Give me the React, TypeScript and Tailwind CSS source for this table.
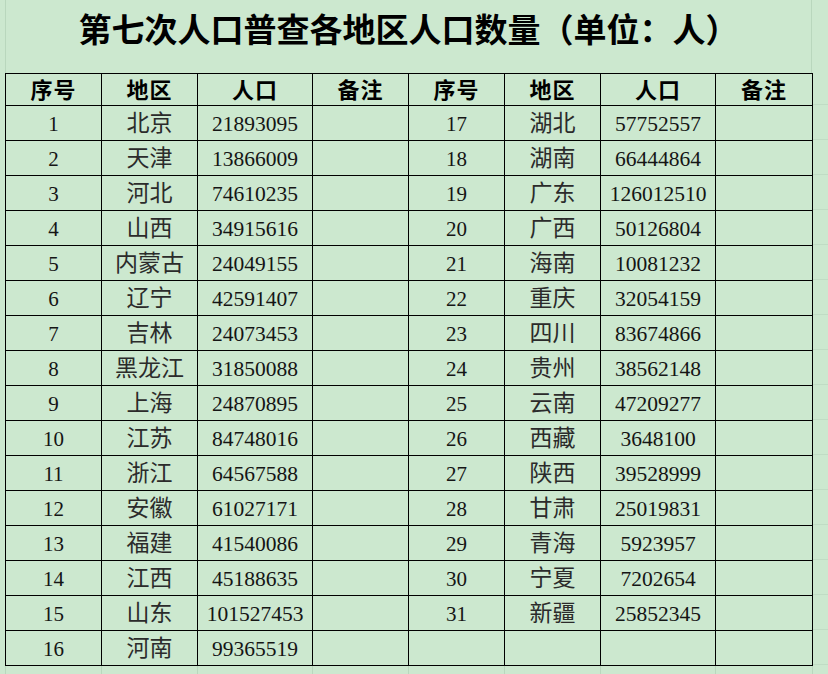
const left: [number, string, string][] = [
  [1, "北京", "21893095"],
  [2, "天津", "13866009"],
  [3, "河北", "74610235"],
  [4, "山西", "34915616"],
  [5, "内蒙古", "24049155"],
  [6, "辽宁", "42591407"],
  [7, "吉林", "24073453"],
  [8, "黑龙江", "31850088"],
  [9, "上海", "24870895"],
  [10, "江苏", "84748016"],
  [11, "浙江", "64567588"],
  [12, "安徽", "61027171"],
  [13, "福建", "41540086"],
  [14, "江西", "45188635"],
  [15, "山东", "101527453"],
  [16, "河南", "99365519"],
];

const right: [number, string, string][] = [
  [17, "湖北", "57752557"],
  [18, "湖南", "66444864"],
  [19, "广东", "126012510"],
  [20, "广西", "50126804"],
  [21, "海南", "10081232"],
  [22, "重庆", "32054159"],
  [23, "四川", "83674866"],
  [24, "贵州", "38562148"],
  [25, "云南", "47209277"],
  [26, "西藏", "3648100"],
  [27, "陕西", "39528999"],
  [28, "甘肃", "25019831"],
  [29, "青海", "5923957"],
  [30, "宁夏", "7202654"],
  [31, "新疆", "25852345"],
];

const widths = [96, 96, 115, 96, 96, 96, 115, 97];
const cjk = { fontFamily: '"Noto Sans CJK SC", sans-serif' };
const serif = { fontFamily: '"Liberation Serif", "Noto Sans CJK SC", serif' };

const HeadCells = () => (
  <>
    {["序号", "地区", "人口", "备注"].map((h) => (
      <th
        key={h}
        className="border border-black pb-[4px] text-[22px] font-bold text-black text-center leading-none tracking-[1px]"
        style={cjk}
      >
        {h}
      </th>
    ))}
  </>
);

const DataCells = ({ row }: { row?: [number, string, string] }) => (
  <>
    <td className="border border-black pt-[3px] text-center text-[21px] leading-none text-[#151515]" style={serif}>
      {row ? row[0] : ""}
    </td>
    <td className="border border-black pb-[3px] text-center text-[23px] text-[#2b2b2b] leading-none" style={cjk}>
      {row ? row[1] : ""}
    </td>
    <td className="border border-black pt-[3px] text-center text-[21.5px] leading-none text-[#151515]" style={serif}>
      {row ? row[2] : ""}
    </td>
    <td className="border border-black" />
  </>
);

export default function App() {
  return (
    <div className="w-[828px] h-[674px] overflow-hidden bg-[#cce8cf]">
      <div className="flex">
        <div className="w-[5px] shrink-0" />
        <div className="flex flex-col">
          <div
            className="w-[807px] h-[73px] border-x border-[#b9d7bd] flex justify-center pt-[12px] text-[33px] font-bold text-black leading-none"
            style={cjk}
          >
            第七次人口普查各地区人口数量（单位：人）
          </div>
          <table className="table-fixed border-collapse w-[808px]">
            <colgroup>
              {widths.map((w, i) => (
                <col key={i} style={{ width: w }} />
              ))}
            </colgroup>
            <tbody>
              <tr className="h-[32px]">
                <HeadCells />
                <HeadCells />
              </tr>
              {left.map((l, i) => (
                <tr key={l[0]} className="h-[35px]">
                  <DataCells row={l} />
                  <DataCells row={right[i]} />
                </tr>
              ))}
              <tr className="h-[35px]">
                {widths.map((_, i) => (
                  <td key={i} className="border-x border-[#b9d7bd]" />
                ))}
              </tr>
            </tbody>
          </table>
        </div>
        <div className="flex-1 flex flex-col pt-[73px]">
          <div className="h-[32px] border-b border-[#c0dcc4] shrink-0" />
          {left.map((l) => (
            <div key={l[0]} className="h-[35px] border-b border-[#c0dcc4] shrink-0" />
          ))}
        </div>
      </div>
    </div>
  );
}
